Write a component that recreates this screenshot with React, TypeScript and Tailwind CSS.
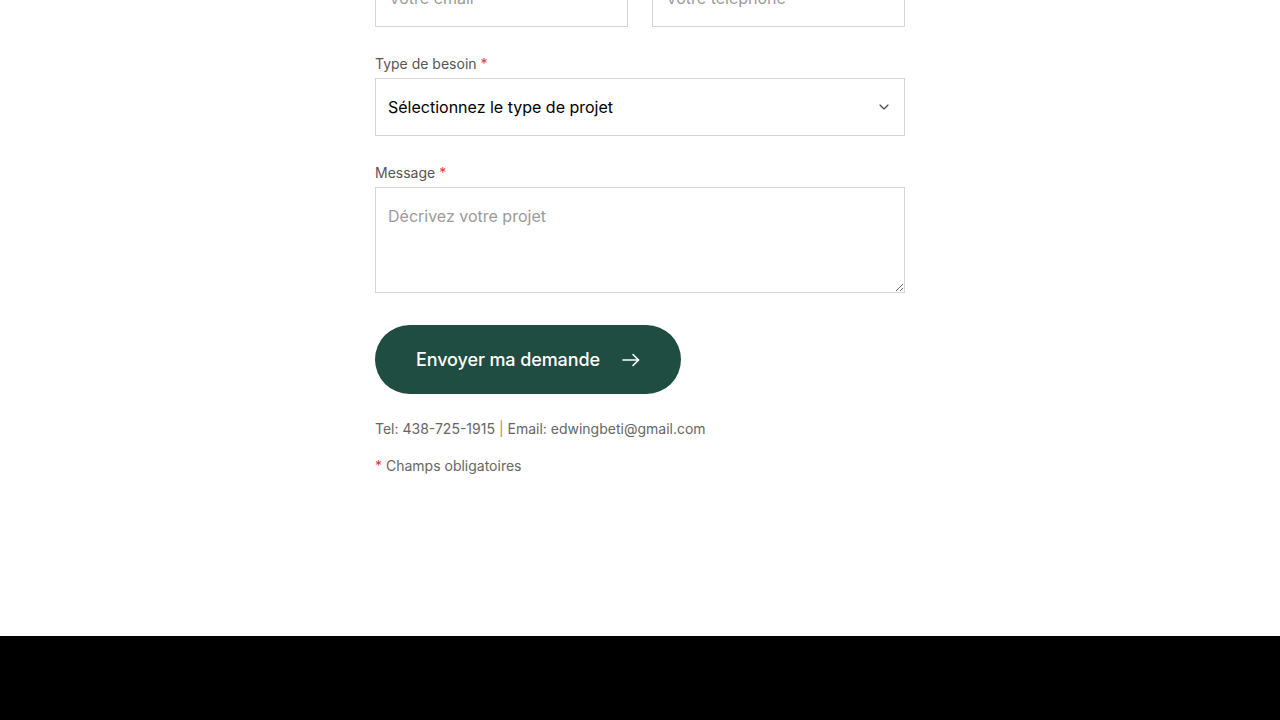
import { ChevronDown } from 'lucide-react';

function LongArrow() {
  return (
    <svg width="18" height="14" viewBox="0 0 18 14" fill="none" stroke="currentColor" strokeWidth="1.6" strokeLinecap="round" strokeLinejoin="round">
      <path d="M1 7h15.5" />
      <path d="M11 1.5l5.5 5.5-5.5 5.5" />
    </svg>
  );
}

export default function App() {
  return (
    <div className="w-[1280px] h-[720px] overflow-hidden bg-white flex flex-col font-['Inter',sans-serif]">
      {/* Form area (page scrolled, top inputs cut off) */}
      <div className="h-[636px] shrink-0 overflow-hidden">
        <div className="w-[530px] mx-auto -mt-[31px] flex flex-col">
          {/* Email / phone row */}
          <div className="grid grid-cols-2 gap-6">
            <input
              placeholder="Votre email"
              className="h-[58px] border border-[#d4d4d8] px-[13px] text-base text-black placeholder:text-[#9a9a9a] outline-none"
            />
            <input
              placeholder="Votre téléphone"
              className="h-[58px] border border-[#d4d4d8] px-[13px] text-base text-black placeholder:text-[#9a9a9a] outline-none"
            />
          </div>

          {/* Type de besoin */}
          <div className="mt-[27px]">
            <label className="block text-sm leading-5 text-[#555] mb-[4px] pt-[0.5px] -mt-[0.5px]">
              Type de besoin <span className="text-[#e53935]">*</span>
            </label>
            <div className="h-[58px] border border-[#d4d4d8] flex items-center justify-between px-[12px]">
              <span className="text-base text-black">Sélectionnez le type de projet</span>
              <ChevronDown size={16} strokeWidth={1.75} className="text-[#444]" />
            </div>
          </div>

          {/* Message */}
          <div className="mt-[27px]">
            <label className="block text-sm leading-5 text-[#555] mb-[4px] pt-[0.5px] -mt-[0.5px]">
              Message <span className="text-[#e53935]">*</span>
            </label>
            <textarea
              placeholder="Décrivez votre projet"
              className="block w-full h-[106px] border border-[#d4d4d8] px-[12px] pt-[16px] pb-[17px] text-base leading-6 text-black placeholder:text-[#9a9a9a] outline-none resize-y"
            />
          </div>

          {/* Submit */}
          <div className="mt-8">
            <button className="h-[69px] w-[306px] rounded-full bg-[#1f4d41] text-white flex items-center pl-[41px] gap-[22px] text-lg font-medium tracking-[-0.1px]">
              <span>Envoyer ma demande</span>
              <LongArrow />
            </button>
          </div>

          <p className="mt-[25px] text-sm leading-5 text-[#666]">
            Tel: 438-725-1915 <span className="text-[#c08a5a]">|</span> Email: edwingbeti@gmail.com
          </p>
          <p className="mt-[17px] text-sm leading-5 text-[#666]">
            <span className="text-[#e53935]">*</span> Champs obligatoires
          </p>
        </div>
      </div>

      {/* Footer */}
      <div className="flex-1 bg-black" />
    </div>
  );
}
